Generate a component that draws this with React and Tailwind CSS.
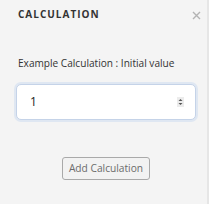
import React from 'react';

export default function App() {
  return (
    <div className="w-[209px] h-[204px] bg-[#f4f4f4] border-r-2 border-[#e6e6e6] font-['Open_Sans',sans-serif] flex flex-col">
      {/* Header */}
      <div className="flex items-center justify-between pl-[18px] pr-[5px] pt-[8px]">
        <span className="text-[10px] font-bold tracking-[1px] text-[#333] leading-[12px]">CALCULATION</span>
        <svg width="9" height="9" viewBox="0 0 9 9" className="mr-[1px] mt-[2px]">
          <path d="M1 1 L8 8 M8 1 L1 8" stroke="#b3b3b3" strokeWidth="1.4" />
        </svg>
      </div>

      <div className="pl-[16px] pr-[11px] mt-[36px]">
        <label className="block text-[10.1px] text-[#333] leading-[14px] pl-[2px]">Example Calculation : Initial value</label>
        <div className="mt-[14px] h-[36px] rounded-[5px] bg-white border border-[#c5d3e8] shadow-[0_0_0_2px_#dfe7f2] flex items-center justify-between pl-[13px] pr-[10px]">
          <span className="text-[12px] text-[#222]">1</span>
          <svg width="7" height="10" viewBox="0 0 7 10" className="mr-[1px]">
            <rect x="0" y="0" width="7" height="10" fill="#ececec" />
            <path d="M1.5 4 L3.5 2 L5.5 4 Z" fill="#555" />
            <path d="M1.5 6 L3.5 8 L5.5 6 Z" fill="#555" />
          </svg>
        </div>
      </div>

      <div className="flex justify-center mt-[37px] pl-[5px]">
        <button className="h-[23px] px-[6px] rounded-[3px] border border-[#a9a9a9] bg-[#f2f2f2] text-[10.2px] text-[#6b6b6b]">
          Add Calculation
        </button>
      </div>
    </div>
  );
}
